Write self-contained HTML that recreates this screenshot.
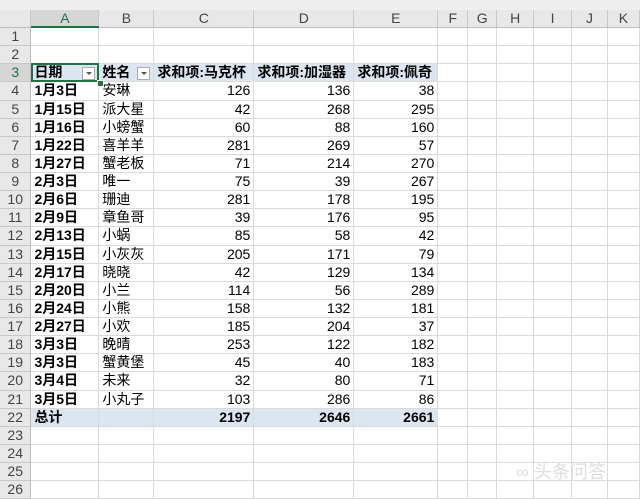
<!DOCTYPE html>
<html><head><meta charset="utf-8"><style>
body{margin:0;width:640px;height:482px;overflow:hidden;background:#fff;font-family:"Liberation Sans","Noto Sans CJK SC",sans-serif;font-size:14px;color:#000}
#top{position:absolute;left:0;top:0;width:640px;height:10px;background:#eeeeee;border-bottom:1px solid #d0d0d0}
table{position:absolute;left:0;top:10px;border-collapse:collapse;table-layout:fixed}
td{height:18.13px;padding:0 3px;border-right:1px solid #dadada;border-bottom:1px solid #dadada;white-space:nowrap;overflow:hidden;line-height:17px;box-sizing:border-box}
tr.h td{height:17px;background:#e8e8e8;text-align:center;color:#444;border-right:1px solid #c8c8c8;border-bottom:1px solid #bdbdbd;font-size:14px}
td.rh{background:#e8e8e8;text-align:center;color:#444;border-right:1px solid #bdbdbd;border-bottom:1px solid #c8c8c8;padding:0}
tr.ph td:not(.rh){background:#dce6f1;font-weight:bold}
tr.tot td:not(.rh){background:#dce6f1;font-weight:bold;border-top:1px solid #95b3d7}
.r{text-align:right}
.b{font-weight:bold}
.dd{display:inline-block;float:right;width:11px;height:11px;border:1px solid #aaa;background:#fff;margin-top:3px;position:relative}
.dd:after{content:"";position:absolute;left:3px;top:4px;border-left:3px solid transparent;border-right:3px solid transparent;border-top:3px solid #555}
#sel{position:absolute;left:31px;top:63px;width:68px;height:19px;border:2px solid #217346;box-sizing:border-box}
#hdl{position:absolute;left:97px;top:80px;width:5px;height:5px;background:#217346;border:1px solid #fff}
#ca{position:absolute;left:31px;top:26px;width:68px;height:2px;background:#217346}
#wm{position:absolute;left:516px;top:458px;color:#ddd;font-size:18px}
</style></head><body>
<div id="top"></div>
<table>
<colgroup><col style="width:31px"><col style="width:68px"><col style="width:55px"><col style="width:100px"><col style="width:100px"><col style="width:84px"><col style="width:30px"><col style="width:29px"><col style="width:37px"><col style="width:38px"><col style="width:36px"><col style="width:32px"></colgroup>
<tr class="h"><td style="background:#e8e8e8"></td><td style="background:#d6d6d6;color:#217346">A</td><td>B</td><td>C</td><td>D</td><td>E</td><td>F</td><td>G</td><td>H</td><td>I</td><td>J</td><td>K</td></tr>
<tr><td class="rh">1</td><td></td><td></td><td></td><td></td><td></td><td></td><td></td><td></td><td></td><td></td><td></td></tr>
<tr><td class="rh">2</td><td></td><td></td><td></td><td></td><td></td><td></td><td></td><td></td><td></td><td></td><td></td></tr>
<tr class="ph"><td class="rh" style="background:#d6d6d6;color:#217346">3</td><td>日期<span class="dd"></span></td><td>姓名<span class="dd"></span></td><td>求和项:马克杯</td><td>求和项:加湿器</td><td>求和项:佩奇</td><td style="background:#fff"></td><td style="background:#fff"></td><td style="background:#fff"></td><td style="background:#fff"></td><td style="background:#fff"></td><td style="background:#fff"></td></tr>
<tr><td class="rh">4</td><td class="b">1月3日</td><td>安琳</td><td class="r">126</td><td class="r">136</td><td class="r">38</td><td></td><td></td><td></td><td></td><td></td><td></td></tr>
<tr><td class="rh">5</td><td class="b">1月15日</td><td>派大星</td><td class="r">42</td><td class="r">268</td><td class="r">295</td><td></td><td></td><td></td><td></td><td></td><td></td></tr>
<tr><td class="rh">6</td><td class="b">1月16日</td><td>小螃蟹</td><td class="r">60</td><td class="r">88</td><td class="r">160</td><td></td><td></td><td></td><td></td><td></td><td></td></tr>
<tr><td class="rh">7</td><td class="b">1月22日</td><td>喜羊羊</td><td class="r">281</td><td class="r">269</td><td class="r">57</td><td></td><td></td><td></td><td></td><td></td><td></td></tr>
<tr><td class="rh">8</td><td class="b">1月27日</td><td>蟹老板</td><td class="r">71</td><td class="r">214</td><td class="r">270</td><td></td><td></td><td></td><td></td><td></td><td></td></tr>
<tr><td class="rh">9</td><td class="b">2月3日</td><td>唯一</td><td class="r">75</td><td class="r">39</td><td class="r">267</td><td></td><td></td><td></td><td></td><td></td><td></td></tr>
<tr><td class="rh">10</td><td class="b">2月6日</td><td>珊迪</td><td class="r">281</td><td class="r">178</td><td class="r">195</td><td></td><td></td><td></td><td></td><td></td><td></td></tr>
<tr><td class="rh">11</td><td class="b">2月9日</td><td>章鱼哥</td><td class="r">39</td><td class="r">176</td><td class="r">95</td><td></td><td></td><td></td><td></td><td></td><td></td></tr>
<tr><td class="rh">12</td><td class="b">2月13日</td><td>小蜗</td><td class="r">85</td><td class="r">58</td><td class="r">42</td><td></td><td></td><td></td><td></td><td></td><td></td></tr>
<tr><td class="rh">13</td><td class="b">2月15日</td><td>小灰灰</td><td class="r">205</td><td class="r">171</td><td class="r">79</td><td></td><td></td><td></td><td></td><td></td><td></td></tr>
<tr><td class="rh">14</td><td class="b">2月17日</td><td>晓晓</td><td class="r">42</td><td class="r">129</td><td class="r">134</td><td></td><td></td><td></td><td></td><td></td><td></td></tr>
<tr><td class="rh">15</td><td class="b">2月20日</td><td>小兰</td><td class="r">114</td><td class="r">56</td><td class="r">289</td><td></td><td></td><td></td><td></td><td></td><td></td></tr>
<tr><td class="rh">16</td><td class="b">2月24日</td><td>小熊</td><td class="r">158</td><td class="r">132</td><td class="r">181</td><td></td><td></td><td></td><td></td><td></td><td></td></tr>
<tr><td class="rh">17</td><td class="b">2月27日</td><td>小欢</td><td class="r">185</td><td class="r">204</td><td class="r">37</td><td></td><td></td><td></td><td></td><td></td><td></td></tr>
<tr><td class="rh">18</td><td class="b">3月3日</td><td>晚晴</td><td class="r">253</td><td class="r">122</td><td class="r">182</td><td></td><td></td><td></td><td></td><td></td><td></td></tr>
<tr><td class="rh">19</td><td class="b">3月3日</td><td>蟹黄堡</td><td class="r">45</td><td class="r">40</td><td class="r">183</td><td></td><td></td><td></td><td></td><td></td><td></td></tr>
<tr><td class="rh">20</td><td class="b">3月4日</td><td>未来</td><td class="r">32</td><td class="r">80</td><td class="r">71</td><td></td><td></td><td></td><td></td><td></td><td></td></tr>
<tr><td class="rh">21</td><td class="b">3月5日</td><td>小丸子</td><td class="r">103</td><td class="r">286</td><td class="r">86</td><td></td><td></td><td></td><td></td><td></td><td></td></tr>
<tr class="tot"><td class="rh">22</td><td>总计</td><td></td><td class="r">2197</td><td class="r">2646</td><td class="r">2661</td><td style="background:#fff;border-top:none"></td><td style="background:#fff;border-top:none"></td><td style="background:#fff;border-top:none"></td><td style="background:#fff;border-top:none"></td><td style="background:#fff;border-top:none"></td><td style="background:#fff;border-top:none"></td></tr>
<tr><td class="rh">23</td><td></td><td></td><td></td><td></td><td></td><td></td><td></td><td></td><td></td><td></td><td></td></tr>
<tr><td class="rh">24</td><td></td><td></td><td></td><td></td><td></td><td></td><td></td><td></td><td></td><td></td><td></td></tr>
<tr><td class="rh">25</td><td></td><td></td><td></td><td></td><td></td><td></td><td></td><td></td><td></td><td></td><td></td></tr>
<tr><td class="rh">26</td><td></td><td></td><td></td><td></td><td></td><td></td><td></td><td></td><td></td><td></td><td></td></tr>
</table>
<div id="ca"></div>
<div id="sel"></div><div id="hdl"></div>
<div id="wm">∞ 头条问答</div>
</body></html>
